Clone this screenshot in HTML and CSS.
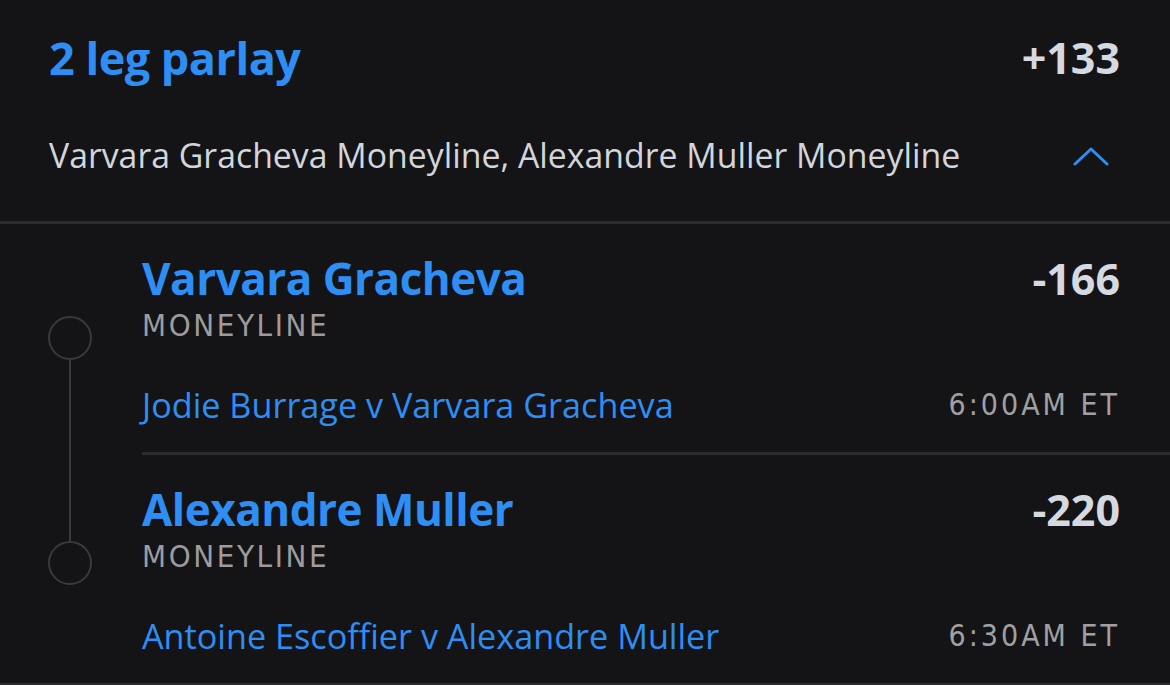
FILE: index.html
```html
<!DOCTYPE html>
<html lang="en">
<head>
    <meta charset="UTF-8">
    <meta name="viewport" content="width=device-width, initial-scale=1.0">
    <title>2 leg parlay</title>

    <link rel="stylesheet" href="styles.css">
</head>
<body>

<div class="parlay">
    <div class="parlay-head">
        <div class="title-row">
            <div class="parlay-title">2 leg parlay</div>
            <div class="odds">+133</div>
        </div>
        <div class="summary-row">
            <div class="summary">Varvara Gracheva Moneyline, Alexandre Muller Moneyline</div>
            <svg class="chevron" width="36" height="22" viewBox="0 0 36 22">
                <polyline points="2,19 18,4 34,19" fill="none" stroke="#2f8ef4" stroke-width="3" stroke-linecap="round" stroke-linejoin="round"/>
            </svg>
        </div>
    </div>

    <div class="legs">
        <div class="leg first">
            <div class="rail">
                <div class="rail-space top"></div>
                <div class="dot"></div>
                <div class="rail-line"></div>
            </div>
            <div class="leg-body">
                <div class="leg-row">
                    <div class="leg-name">Varvara Gracheva</div>
                    <div class="odds leg-odds">-166</div>
                </div>
                <div class="market">MONEYLINE</div>
                <div class="event-row">
                    <div class="event">Jodie Burrage v Varvara Gracheva</div>
                    <div class="time">6:00AM ET</div>
                </div>
            </div>
        </div>

        <div class="leg last">
            <div class="rail">
                <div class="rail-line top"></div>
                <div class="dot"></div>
                <div class="rail-space"></div>
            </div>
            <div class="leg-body">
                <div class="leg-row">
                    <div class="leg-name">Alexandre Muller</div>
                    <div class="odds leg-odds">-220</div>
                </div>
                <div class="market">MONEYLINE</div>
                <div class="event-row">
                    <div class="event">Antoine Escoffier v Alexandre Muller</div>
                    <div class="time">6:30AM ET</div>
                </div>
            </div>
        </div>
    </div>
</div>

</body>
</html>
```

FILE: styles.css
```css
body {
    margin: 0;
    background: #141416;
    font-family: "Open Sans", "Liberation Sans", sans-serif;
    overflow: hidden;
}

.parlay {
    width: 1170px;
}

.parlay-head {
    padding: 0 50px 0 49px;
    border-bottom: 3px solid #2c2c2e;
}

.title-row {
    height: 120px;
    display: flex;
    justify-content: space-between;
    align-items: center;
    margin-top: -3px;
    margin-bottom: 3px;
}

.parlay-title {
    font-size: 45px;
    font-weight: bold;
    color: #2f8ef4;
    letter-spacing: -0.5px;
}

.odds {
    font-size: 43px;
    font-weight: bold;
    color: #d5d9e0;
    letter-spacing: 0;
}

.summary-row {
    height: 101px;
    display: flex;
    justify-content: space-between;
    align-items: center;
}

.summary {
    font-size: 33.8px;
    color: #d2d6dc;
    margin-top: -32px;
}

.chevron {
    margin-right: 11px;
    margin-top: -30px;
}

.legs {
    border-bottom: 3px solid #2c2c2e;
}

.leg {
    display: flex;
}

.rail {
    width: 142px;
    display: flex;
    flex-direction: column;
    align-items: center;
}

.rail > * {
    margin-right: 2px;
}

.rail-space.top {
    height: 92px;
}

.rail-line {
    flex: 1;
    width: 2px;
    background: #3a3a3c;
}

.rail-line.top {
    flex: none;
    height: 89px;
}

.rail-space {
    flex: 1;
}

.dot {
    width: 40px;
    height: 40px;
    border: 2px solid #3a3a3c;
    border-radius: 50%;
}

.leg-body {
    flex: 1;
    padding: 30px 50px 28px 0;
}

.leg.last .leg-body {
    border-top: 3px solid #2c2c2e;
}

.leg-row {
    display: flex;
    justify-content: space-between;
    align-items: center;
    height: 48px;
}

.leg-name {
    font-size: 44px;
    font-weight: bold;
    color: #2f8ef4;
    letter-spacing: -0.5px;
}

.market {
    font-family: "DejaVu Sans", sans-serif;
    font-stretch: condensed;
    font-size: 31px;
    letter-spacing: 2.6px;
    color: #9c9c9e;
    line-height: 40px;
    margin-top: 3px;
}

.event-row {
    display: flex;
    justify-content: space-between;
    align-items: center;
    height: 40px;
    margin-top: 39px;
}

.event {
    font-size: 34.2px;
    color: #2f8ef4;
}

.time {
    font-family: "DejaVu Sans", sans-serif;
    font-stretch: condensed;
    font-size: 30px;
    letter-spacing: 3px;
    color: #a0a0a2;
}
```
